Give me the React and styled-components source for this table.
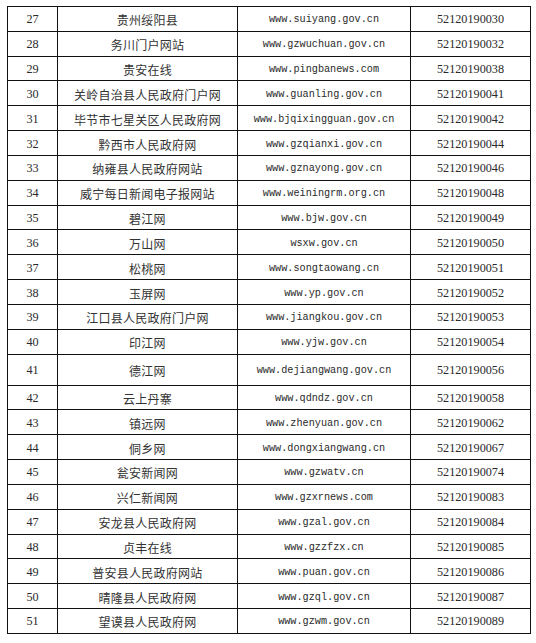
import React from 'react';
import styled, { createGlobalStyle } from 'styled-components';

const GlobalStyle = createGlobalStyle`
  html, body {
    margin: 0;
    padding: 0;
    background: #fff;
  }
  body {
    font-family: "Liberation Serif", "Noto Sans CJK SC", serif;
    color: #2a2a2a;
  }
`;

const Page = styled.div`
  padding: 6px 0 0 7px;
`;

const Table = styled.div`
  display: grid;
  grid-template-columns: 50px 180px 173px 120px;
  width: max-content;
  border-top: 1px solid #111;
  border-left: 1px solid #111;
`;

const Cell = styled.div`
  box-sizing: border-box;
  height: ${p => (p.$tall ? 31 : 24.83)}px;
  display: flex;
  align-items: center;
  justify-content: center;
  padding-top: 2px;
  border-right: 1px solid #111;
  border-bottom: 1px solid #111;
  white-space: nowrap;
  overflow: hidden;
`;

const Num = styled(Cell)`
  font-family: "Liberation Serif", serif;
  font-size: 12.2px;
`;

const Name = styled(Cell)`
  font-family: "Noto Sans CJK SC", sans-serif;
  font-size: 12px;
  letter-spacing: 0.25px;
  font-weight: 400;
  color: #333;
`;

const Url = styled(Cell)`
  font-family: "Liberation Mono", monospace;
  font-size: 10.2px;
`;

const rows = [
  [27, '贵州绥阳县', 'www.suiyang.gov.cn', '52120190030'],
  [28, '务川门户网站', 'www.gzwuchuan.gov.cn', '52120190032'],
  [29, '贵安在线', 'www.pingbanews.com', '52120190038'],
  [30, '关岭自治县人民政府门户网', 'www.guanling.gov.cn', '52120190041'],
  [31, '毕节市七星关区人民政府网', 'www.bjqixingguan.gov.cn', '52120190042'],
  [32, '黔西市人民政府网', 'www.gzqianxi.gov.cn', '52120190044'],
  [33, '纳雍县人民政府网站', 'www.gznayong.gov.cn', '52120190046'],
  [34, '威宁每日新闻电子报网站', 'www.weiningrm.org.cn', '52120190048'],
  [35, '碧江网', 'www.bjw.gov.cn', '52120190049'],
  [36, '万山网', 'wsxw.gov.cn', '52120190050'],
  [37, '松桃网', 'www.songtaowang.cn', '52120190051'],
  [38, '玉屏网', 'www.yp.gov.cn', '52120190052'],
  [39, '江口县人民政府门户网', 'www.jiangkou.gov.cn', '52120190053'],
  [40, '印江网', 'www.yjw.gov.cn', '52120190054'],
  [41, '德江网', 'www.dejiangwang.gov.cn', '52120190056', true],
  [42, '云上丹寨', 'www.qdndz.gov.cn', '52120190058'],
  [43, '镇远网', 'www.zhenyuan.gov.cn', '52120190062'],
  [44, '侗乡网', 'www.dongxiangwang.cn', '52120190067'],
  [45, '瓮安新闻网', 'www.gzwatv.cn', '52120190074'],
  [46, '兴仁新闻网', 'www.gzxrnews.com', '52120190083'],
  [47, '安龙县人民政府网', 'www.gzal.gov.cn', '52120190084'],
  [48, '贞丰在线', 'www.gzzfzx.cn', '52120190085'],
  [49, '普安县人民政府网站', 'www.puan.gov.cn', '52120190086'],
  [50, '晴隆县人民政府网', 'www.gzql.gov.cn', '52120190087'],
  [51, '望谟县人民政府网', 'www.gzwm.gov.cn', '52120190089'],
];

export default function App() {
  return (
    <Page>
      <GlobalStyle />
      <Table>
        {rows.map(([no, name, url, code, tall]) => (
          <React.Fragment key={no}>
            <Num $tall={tall}>{no}</Num>
            <Name $tall={tall}>{name}</Name>
            <Url $tall={tall}>{url}</Url>
            <Num $tall={tall}>{code}</Num>
          </React.Fragment>
        ))}
      </Table>
    </Page>
  );
}
